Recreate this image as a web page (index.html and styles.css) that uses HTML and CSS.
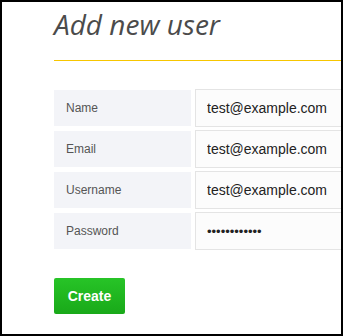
FILE: index.html
```html
<!DOCTYPE html>
<html lang="en">
<head>
  <meta charset="UTF-8" />
  <meta name="viewport" content="width=device-width, initial-scale=1" />
  <title>Add new user</title>
  <link rel="stylesheet" href="styles.css">
</head>
<body>

  <div class="frame">
    <div class="page">
      <h1>Add new user</h1>

      <form class="user-form">
        <div class="row">
          <label for="name">Name</label>
          <input id="name" type="text" value="test@example.com" />
        </div>
        <div class="row">
          <label for="email">Email</label>
          <input id="email" type="text" value="test@example.com" />
        </div>
        <div class="row">
          <label for="username">Username</label>
          <input id="username" type="text" value="test@example.com" />
        </div>
        <div class="row">
          <label for="password">Password</label>
          <input id="password" class="secret" type="password" value="secretpasswd" />
        </div>

        <button type="button" class="create-btn">Create</button>
      </form>
    </div>
  </div>

</body>
</html>
```

FILE: styles.css
```css
body {
  margin: 0;
  background-color: white;
  font-family: 'Liberation Sans', Arial, sans-serif;
}

.frame {
  width: 343px;
  height: 336px;
  box-sizing: border-box;
  border: 2px solid #000;
  overflow: hidden;
  background-color: white;
}

.page {
  width: 420px;
  padding-left: 52px;
}

h1 {
  margin: 0 0 28px;
  padding: 5px 0 0;
  height: 59px;
  box-sizing: border-box;
  font-family: 'Open Sans', sans-serif;
  font-style: italic;
  font-weight: 400;
  font-size: 28px;
  line-height: 34px;
  color: #4b4b4b;
  border-bottom: 1px solid #f7c600;
}

.user-form {
  display: flex;
  flex-direction: column;
  gap: 3px;
}

.row {
  display: flex;
  align-items: center;
  gap: 4px;
  height: 38px;
}

.row label {
  width: 137px;
  height: 36px;
  box-sizing: border-box;
  background-color: #f3f4f8;
  padding-left: 12px;
  display: flex;
  align-items: center;
  font-size: 12px;
  color: #555;
}

.row input {
  flex: 1;
  height: 38px;
  box-sizing: border-box;
  border: 1px solid #e4e4e4;
  background-color: #fcfcfc;
  padding: 0 11px;
  font-family: 'Liberation Sans', Arial, sans-serif;
  font-size: 14px;
  color: #222;
  outline: none;
}

.row input.secret {
  font-size: 13px;
}

.create-btn {
  align-self: flex-start;
  margin-top: 25px;
  width: 71px;
  height: 36px;
  border: none;
  border-radius: 2px;
  background: linear-gradient(to bottom, #27c427, #19a919);
  color: white;
  font-family: 'Liberation Sans', Arial, sans-serif;
  font-size: 14px;
  font-weight: 700;
  cursor: pointer;
}
```
